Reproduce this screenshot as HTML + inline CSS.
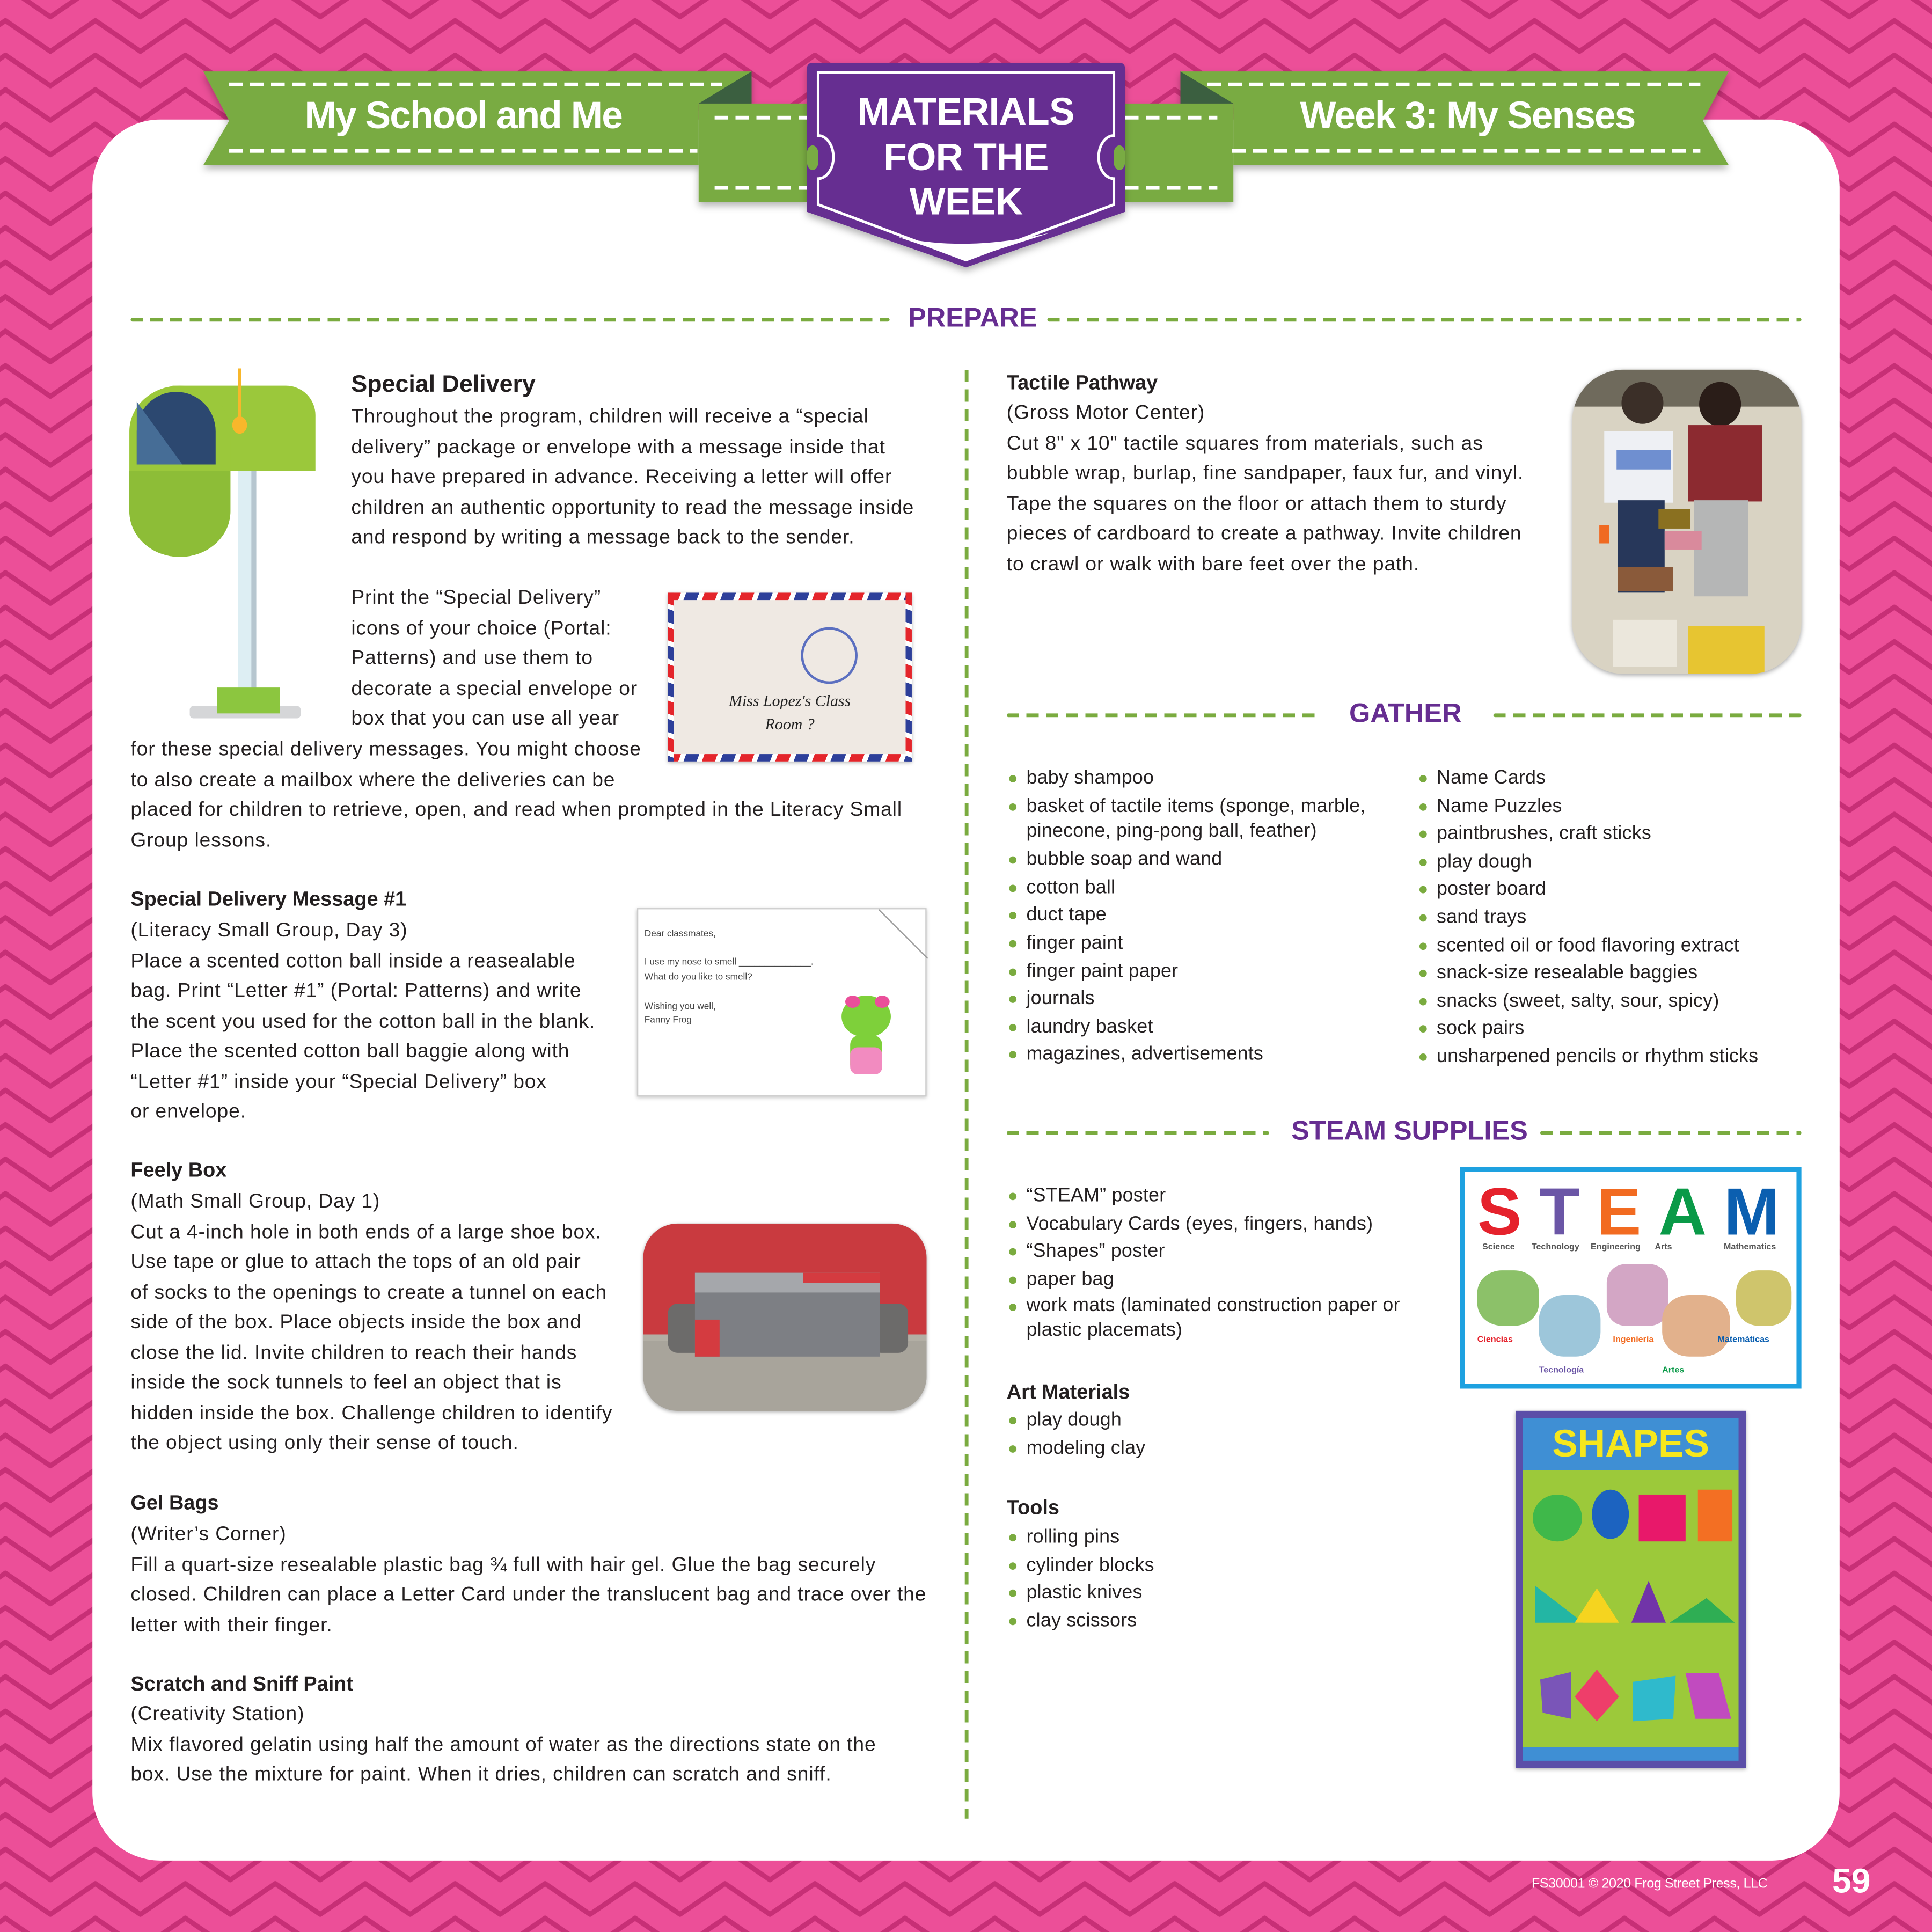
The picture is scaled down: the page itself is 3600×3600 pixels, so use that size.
<!DOCTYPE html>
<html><head><meta charset="utf-8">
<style>
*{margin:0;padding:0;box-sizing:border-box}
html,body{width:3600px;height:3600px;overflow:hidden;background:#ec4f98}
#pg{position:absolute;left:0;top:0;width:1568px;height:1568px;transform:scale(2.295918);transform-origin:0 0;font-family:"Liberation Sans",sans-serif;color:#231f20}
.a{position:absolute}
.t{position:absolute;font-size:16.2px;line-height:24.5px;letter-spacing:0.4px;white-space:nowrap}
.h{font-weight:bold;letter-spacing:0}
.bl{position:absolute;font-size:15.6px;line-height:22.6px;letter-spacing:0.1px;white-space:nowrap;list-style:none}
.bl li{position:relative;padding-left:16px}
.bl li:before{content:"";position:absolute;left:2px;top:8px;width:6px;height:6px;border-radius:50%;background:#7aab3f}
.sec{position:absolute;font-weight:bold;color:#662d91;font-size:22px;letter-spacing:0;white-space:nowrap}
.dash{position:absolute;height:3px;background:repeating-linear-gradient(90deg,#7aab3f 0 10px,transparent 10px 16px);border-radius:2px}
.wd{position:absolute;height:3.4px;background:repeating-linear-gradient(90deg,#fff 0 11px,transparent 11px 17px)}
</style></head><body>
<div id="pg">
<svg class="a" style="left:0;top:0" width="1568" height="1568">
<defs><pattern id="zz" width="73" height="28" patternUnits="userSpaceOnUse" patternTransform="translate(4.4,14.7)">
<g fill="none" stroke="#c72f76" stroke-width="4" stroke-linejoin="round">
<path d="M-36.5,27 L0,2 L36.5,27 L73,2 L109.5,27"/>
<path d="M-36.5,-1 L0,-26 L36.5,-1 L73,-26 L109.5,-1"/>
<path d="M-36.5,55 L0,30 L36.5,55 L73,30 L109.5,55"/>
</g></pattern>
<filter id="sh" x="-10%" y="-10%" width="120%" height="130%"><feDropShadow dx="0" dy="3" stdDeviation="3" flood-opacity="0.3"/></filter></defs>
<rect width="1568" height="1568" fill="#ec4f98"/>
<rect width="1568" height="1568" fill="url(#zz)"/>
<rect x="75" y="97" width="1418" height="1413" rx="55" fill="#fff"/>
<g filter="url(#sh)">
<polygon points="567,84 655,84 655,164 567,164" fill="#79ab43"/>
<polygon points="165,58 610,58 610,84 567,84 567,134 165,134 186,98" fill="#79ab43"/>
<polygon points="567,84 610,58 610,84" fill="#3b5e40"/>
<polygon points="913,84 1001,84 1001,164 913,164" fill="#79ab43"/>
<polygon points="958,58 1403,58 1382,98 1403,134 1001,134 1001,84 958,84" fill="#79ab43"/>
<polygon points="1001,84 958,58 958,84" fill="#3b5e40"/>
</g>
<g filter="url(#sh)">
<path d="M655,55 a4,4 0 0 1 4,-4 H909 a4,4 0 0 1 4,4 V172 L784,217 L655,172Z" fill="#662d91"/>
</g>
<path d="M664,59 H904 V110 a12,17 0 0 0 0,35 V166 L784,211 L664,166 V145 a12,17 0 0 0 0,-35Z" fill="none" stroke="#fff" stroke-width="2.2"/>
<path d="M728,192 Q784,205 852,189 L784,211Z" fill="#fff"/>
<rect x="655" y="118" width="9" height="20" rx="6" fill="#79ab43"/>
<rect x="904" y="118" width="9" height="20" rx="6" fill="#79ab43"/>
</svg>
<div class="wd" style="left:186px;top:67px;width:400px"></div>
<div class="wd" style="left:186px;top:121px;width:380px"></div>
<div class="wd" style="left:580px;top:94px;width:75px"></div>
<div class="wd" style="left:580px;top:151px;width:75px"></div>
<div class="wd" style="left:913px;top:94px;width:75px"></div>
<div class="wd" style="left:913px;top:151px;width:75px"></div>
<div class="wd" style="left:980px;top:67px;width:400px"></div>
<div class="wd" style="left:1000px;top:121px;width:380px"></div>
<div class="a" style="left:165px;top:76px;width:422px;text-align:center;color:#fff;font-size:31px;font-weight:bold;letter-spacing:-0.8px">My School and Me</div>
<div class="a" style="left:980px;top:76px;width:422px;text-align:center;color:#fff;font-size:31px;font-weight:bold;letter-spacing:-0.8px">Week 3: My Senses</div>
<div class="a" style="left:655px;top:73px;width:258px;text-align:center;color:#fff;font-size:31px;font-weight:bold;line-height:36.5px;letter-spacing:-0.3px">MATERIALS<br>FOR THE<br>WEEK</div>

<div class="dash" style="left:106px;top:258px;width:616px"></div>
<div class="sec" style="left:737px;top:245px">PREPARE</div>
<div class="dash" style="left:850px;top:258px;width:612px"></div>
<div class="a" style="left:783px;top:300px;width:3px;height:1176px;background:repeating-linear-gradient(180deg,#7aab3f 0 10px,transparent 10px 16px)"></div>

<svg class="a" style="left:100px;top:295px" width="160" height="292" viewBox="100 295 160 292">
<rect x="154" y="573" width="90" height="10" rx="3" fill="#d5d6d8"/>
<rect x="193" y="380" width="15" height="180" fill="#ddeef3"/>
<rect x="204" y="380" width="4" height="180" fill="#b6c6cf"/>
<rect x="176" y="558" width="51" height="21" fill="#8cc63f"/>
<path d="M140,313 H232 a24,24 0 0 1 24,24 V382 H140Z" fill="#9bc83b"/>
<path d="M105,350 a41,37 0 0 1 82,0 V415 a41,37 0 0 1 -82,0Z" fill="#9bc83b"/>
<path d="M105,382 H187 V415 a41,37 0 0 1 -82,0Z" fill="#8dbd37"/>
<path d="M111,377 V350 a32,32 0 0 1 64,0 V377Z" fill="#2c4870"/>
<path d="M111,377 V326 L148,377Z" fill="#466d96"/>
<rect x="193" y="299" width="3" height="48" fill="#f8b72b"/>
<ellipse cx="194.5" cy="345" rx="6" ry="7" fill="#f8b72b"/>
</svg>

<div class="t h" style="left:285px;top:300px;font-size:19.5px">Special Delivery</div>
<div class="t" style="left:285px;top:326px">Throughout the program, children will receive a “special<br>delivery” package or envelope with a message inside that<br>you have prepared in advance. Receiving a letter will offer<br>children an authentic opportunity to read the message inside<br>and respond by writing a message back to the sender.</div>
<div class="t" style="left:285px;top:473px">Print the “Special Delivery”<br>icons of your choice (Portal:<br>Patterns) and use them to<br>decorate a special envelope or<br>box that you can use all year</div>
<div class="t" style="left:106px;top:596px">for these special delivery messages. You might choose<br>to also create a mailbox where the deliveries can be<br>placed for children to retrieve, open, and read when prompted in the Literacy Small<br>Group lessons.</div>

<div class="a" style="left:542px;top:481px;width:198px;height:137px;background:#efe9e3;box-shadow:0 1px 3px rgba(0,0,0,.3);overflow:hidden">
<div class="a" style="left:0;top:0;right:0;height:6px;background:repeating-linear-gradient(110deg,#e4252b 0 10px,#fff 10px 14px,#2d3f9a 14px 24px,#fff 24px 28px)"></div>
<div class="a" style="left:0;bottom:0;right:0;height:6px;background:repeating-linear-gradient(110deg,#e4252b 0 10px,#fff 10px 14px,#2d3f9a 14px 24px,#fff 24px 28px)"></div>
<div class="a" style="left:0;top:0;bottom:0;width:5px;background:repeating-linear-gradient(200deg,#e4252b 0 10px,#fff 10px 14px,#2d3f9a 14px 24px,#fff 24px 28px)"></div>
<div class="a" style="right:0;top:0;bottom:0;width:5px;background:repeating-linear-gradient(200deg,#e4252b 0 10px,#fff 10px 14px,#2d3f9a 14px 24px,#fff 24px 28px)"></div>
<div class="a" style="left:108px;top:28px;width:46px;height:46px;border:2px solid #5b6fc0;border-radius:50%"></div>
<div class="a" style="left:0;top:78px;width:198px;text-align:center;font-family:'Liberation Serif',serif;font-style:italic;font-size:13px;line-height:19px;color:#222">Miss Lopez's Class<br>Room ?</div>
</div>

<div class="t h" style="left:106px;top:718px;font-size:16.5px">Special Delivery Message #1</div>
<div class="t" style="left:106px;top:743px">(Literacy Small Group, Day 3)<br>Place a scented cotton ball inside a reasealable<br>bag. Print “Letter #1” (Portal: Patterns) and write<br>the scent you used for the cotton ball in the blank.<br>Place the scented cotton ball baggie along with<br>“Letter #1” inside your “Special Delivery” box<br>or envelope.</div>

<div class="a" style="left:517px;top:737px;width:235px;height:153px;background:#fff;border:1px solid #ccc;box-shadow:0 1px 3px rgba(0,0,0,.25);font-size:7.5px;color:#444;line-height:11px">
<div class="a" style="left:5px;top:14px">Dear classmates,</div>
<div class="a" style="left:5px;top:37px">I use my nose to smell ______________.</div>
<div class="a" style="left:5px;top:49px">What do you like to smell?</div>
<div class="a" style="left:5px;top:73px">Wishing you well,<br>Fanny Frog</div>
<svg class="a" style="left:195px;top:0" width="40" height="40"><path d="M0,0 L40,40" stroke="#999" stroke-width="1"/></svg>
<div class="a" style="left:165px;top:70px;width:40px;height:34px;background:#7ed03a;border-radius:50%"></div>
<div class="a" style="left:168px;top:70px;width:12px;height:10px;background:#ea4f9a;border-radius:50%"></div>
<div class="a" style="left:192px;top:70px;width:12px;height:10px;background:#ea4f9a;border-radius:50%"></div>
<div class="a" style="left:172px;top:102px;width:26px;height:32px;background:#7ed03a;border-radius:8px"></div>
<div class="a" style="left:172px;top:112px;width:26px;height:22px;background:#f28bc0;border-radius:6px"></div>
</div>

<div class="t h" style="left:106px;top:938px;font-size:16.5px">Feely Box</div>
<div class="t" style="left:106px;top:963px">(Math Small Group, Day 1)<br>Cut a 4-inch hole in both ends of a large shoe box.<br>Use tape or glue to attach the tops of an old pair<br>of socks to the openings to create a tunnel on each<br>side of the box. Place objects inside the box and<br>close the lid. Invite children to reach their hands<br>inside the sock tunnels to feel an object that is<br>hidden inside the box. Challenge children to identify<br>the object using only their sense of touch.</div>

<div class="a" style="left:522px;top:993px;width:230px;height:152px;border-radius:28px;overflow:hidden;background:#b3aea4;box-shadow:0 1px 3px rgba(0,0,0,.3)">
<div class="a" style="left:0;top:0;width:230px;height:90px;background:#c93a3f"></div>
<div class="a" style="left:0;top:95px;width:230px;height:60px;background:#a8a49b"></div>
<div class="a" style="left:20px;top:65px;width:30px;height:40px;background:#6c6b6a;border-radius:8px"></div>
<div class="a" style="left:185px;top:65px;width:30px;height:40px;background:#6c6b6a;border-radius:8px"></div>
<div class="a" style="left:42px;top:40px;width:150px;height:68px;background:#7d7f84"></div>
<div class="a" style="left:42px;top:40px;width:150px;height:16px;background:#a5a7ab"></div>
<div class="a" style="left:42px;top:78px;width:20px;height:30px;background:#d43b40"></div>
<div class="a" style="left:130px;top:40px;width:62px;height:8px;background:#d43b40"></div>
</div>

<div class="t h" style="left:106px;top:1208px;font-size:16.5px">Gel Bags</div>
<div class="t" style="left:106px;top:1233px">(Writer’s Corner)<br>Fill a quart-size resealable plastic bag ¾ full with hair gel. Glue the bag securely<br>closed. Children can place a Letter Card under the translucent bag and trace over the<br>letter with their finger.</div>
<div class="t h" style="left:106px;top:1355px;font-size:16.5px">Scratch and Sniff Paint</div>
<div class="t" style="left:106px;top:1379px">(Creativity Station)<br>Mix flavored gelatin using half the amount of water as the directions state on the<br>box. Use the mixture for paint. When it dries, children can scratch and sniff.</div>

<div class="t h" style="left:817px;top:299px;font-size:16.5px">Tactile Pathway</div>
<div class="t" style="left:817px;top:323px">(Gross Motor Center)<br>Cut 8" x 10" tactile squares from materials, such as<br>bubble wrap, burlap, fine sandpaper, faux fur, and vinyl.<br>Tape the squares on the floor or attach them to sturdy<br>pieces of cardboard to create a pathway. Invite children<br>to crawl or walk with bare feet over the path.</div>

<div class="a" style="left:1276px;top:300px;width:186px;height:247px;border-radius:42px;overflow:hidden;background:#d9d3c3;box-shadow:0 1px 4px rgba(0,0,0,.35)">
<div class="a" style="left:0;top:0;width:186px;height:30px;background:#6f6a5c"></div>
<div class="a" style="left:40px;top:10px;width:34px;height:34px;border-radius:50%;background:#3b2f28"></div>
<div class="a" style="left:26px;top:50px;width:56px;height:58px;background:#eef0f4"></div>
<div class="a" style="left:36px;top:65px;width:44px;height:16px;background:#6f8fd0"></div>
<div class="a" style="left:37px;top:106px;width:38px;height:75px;background:#27375a"></div>
<div class="a" style="left:37px;top:160px;width:45px;height:20px;background:#8a5a3a"></div>
<div class="a" style="left:103px;top:10px;width:34px;height:36px;border-radius:50%;background:#2a1d18"></div>
<div class="a" style="left:94px;top:45px;width:60px;height:62px;background:#8c2a30"></div>
<div class="a" style="left:99px;top:106px;width:44px;height:78px;background:#b5b6b6"></div>
<div class="a" style="left:70px;top:113px;width:26px;height:16px;background:#8a7020"></div>
<div class="a" style="left:75px;top:131px;width:30px;height:15px;background:#d98a9c"></div>
<div class="a" style="left:22px;top:126px;width:8px;height:15px;background:#f06a22"></div>
<div class="a" style="left:94px;top:208px;width:62px;height:40px;background:#e7c531"></div>
<div class="a" style="left:33px;top:203px;width:52px;height:38px;background:#ebe7dc"></div>
</div>

<div class="dash" style="left:817px;top:579px;width:252px"></div>
<div class="sec" style="left:1095px;top:566px">GATHER</div>
<div class="dash" style="left:1212px;top:579px;width:250px"></div>
<ul class="bl" style="left:817px;top:621px">
<li>baby shampoo</li>
<li style="line-height:20px;margin-bottom:2.6px;padding-top:1px">basket of tactile items (sponge, marble,<br>pinecone, ping-pong ball, feather)</li>
<li>bubble soap and wand</li><li>cotton ball</li><li>duct tape</li><li>finger paint</li><li>finger paint paper</li><li>journals</li><li>laundry basket</li><li>magazines, advertisements</li></ul>
<ul class="bl" style="left:1150px;top:621px">
<li>Name Cards</li><li>Name Puzzles</li><li>paintbrushes, craft sticks</li><li>play dough</li><li>poster board</li><li>sand trays</li><li>scented oil or food flavoring extract</li><li>snack-size resealable baggies</li><li>snacks (sweet, salty, sour, spicy)</li><li>sock pairs</li><li>unsharpened pencils or rhythm sticks</li></ul>

<div class="dash" style="left:817px;top:918px;width:213px"></div>
<div class="sec" style="left:1048px;top:905px">STEAM SUPPLIES</div>
<div class="dash" style="left:1250px;top:918px;width:212px"></div>
<ul class="bl" style="left:817px;top:960px">
<li>“STEAM” poster</li><li>Vocabulary Cards (eyes, fingers, hands)</li><li>“Shapes” poster</li><li>paper bag</li>
<li style="line-height:20px">work mats (laminated construction paper or<br>plastic placemats)</li></ul>
<div class="t h" style="left:817px;top:1118px;font-size:16.5px">Art Materials</div>
<ul class="bl" style="left:817px;top:1142px"><li>play dough</li><li>modeling clay</li></ul>
<div class="t h" style="left:817px;top:1212px;font-size:16.5px">Tools</div>
<ul class="bl" style="left:817px;top:1237px"><li>rolling pins</li><li>cylinder blocks</li><li>plastic knives</li><li>clay scissors</li></ul>

<div class="a" style="left:1185px;top:947px;width:277px;height:180px;background:#fff;border:4px solid #1ea1e0;font-weight:bold;overflow:hidden">
<div class="a" style="left:10px;top:4px;font-size:54px;line-height:58px;letter-spacing:0;white-space:nowrap"><span style="color:#e5222c">S</span><span style="color:#6b56a6;margin-left:14px">T</span><span style="color:#f26b21;margin-left:14px">E</span><span style="color:#0a9a48;margin-left:14px">A</span><span style="color:#0b5fb0;margin-left:14px">M</span></div>
<div class="a" style="left:14px;top:58px;font-size:7px;color:#555">Science</div>
<div class="a" style="left:54px;top:58px;font-size:7px;color:#555">Technology</div>
<div class="a" style="left:102px;top:58px;font-size:7px;color:#555">Engineering</div>
<div class="a" style="left:154px;top:58px;font-size:7px;color:#555">Arts</div>
<div class="a" style="left:210px;top:58px;font-size:7px;color:#555">Mathematics</div>
<div class="a" style="left:10px;top:80px;width:50px;height:45px;border-radius:40%;background:#8cc169"></div>
<div class="a" style="left:60px;top:100px;width:50px;height:50px;border-radius:40%;background:#9dc6da"></div>
<div class="a" style="left:115px;top:75px;width:50px;height:50px;border-radius:30%;background:#d3a6c5"></div>
<div class="a" style="left:160px;top:100px;width:55px;height:50px;border-radius:40%;background:#e2b18c"></div>
<div class="a" style="left:220px;top:80px;width:45px;height:45px;border-radius:40%;background:#cfc56c"></div>
<div class="a" style="left:10px;top:133px;font-size:7px;color:#e5222c">Ciencias</div>
<div class="a" style="left:120px;top:133px;font-size:7px;color:#f26b21">Ingeniería</div>
<div class="a" style="left:205px;top:133px;font-size:7px;color:#0b5fb0">Matemáticas</div>
<div class="a" style="left:60px;top:158px;font-size:7px;color:#6b56a6">Tecnología</div>
<div class="a" style="left:160px;top:158px;font-size:7px;color:#0a9a48">Artes</div>
</div>

<div class="a" style="left:1230px;top:1145px;width:187px;height:290px;background:#5b4ea8;padding:5px;box-shadow:0 1px 3px rgba(0,0,0,.3)">
<div class="a" style="left:6px;top:6px;width:175px;height:42px;background:#3f8fd4"></div>
<div class="a" style="left:6px;top:6px;width:175px;text-align:center;color:#f6e71c;font-weight:bold;font-size:31px;line-height:42px">SHAPES</div>
<div class="a" style="left:6px;top:48px;width:175px;height:225px;background:#9cc93a"></div>
<div class="a" style="left:6px;top:273px;width:175px;height:11px;background:#3f8fd4"></div>
<div class="a" style="left:14px;top:68px;width:40px;height:38px;border-radius:50%;background:#3fb84a"></div>
<div class="a" style="left:62px;top:64px;width:30px;height:40px;border-radius:50%;background:#1c63c0"></div>
<div class="a" style="left:100px;top:68px;width:38px;height:38px;background:#e8186a"></div>
<div class="a" style="left:148px;top:64px;width:28px;height:42px;background:#f36f23"></div>
<svg class="a" style="left:0;top:0" width="187" height="290">
<polygon points="16,142 16,172 55,172" fill="#23b6a4"/>
<polygon points="48,172 66,144 84,172" fill="#f5d41f"/>
<polygon points="94,172 108,138 122,172" fill="#7134a8"/>
<polygon points="125,172 155,152 178,172" fill="#2fae54"/>
<polygon points="20,218 45,212 45,250 22,245" fill="#7a55b8"/>
<polygon points="66,210 84,232 66,252 48,232" fill="#ee3e6a"/>
<polygon points="95,220 130,215 128,250 95,252" fill="#2fbacc"/>
<polygon points="138,213 165,213 175,250 146,250" fill="#c14bbf"/>
</svg>
</div>

<div class="a" style="left:1243px;top:1523px;color:#fff;font-size:11px;letter-spacing:-0.2px">FS30001 © 2020 Frog Street Press, LLC</div>
<div class="a" style="left:1487px;top:1511px;color:#fff;font-size:28px;font-weight:bold">59</div>
</div>
</body></html>
